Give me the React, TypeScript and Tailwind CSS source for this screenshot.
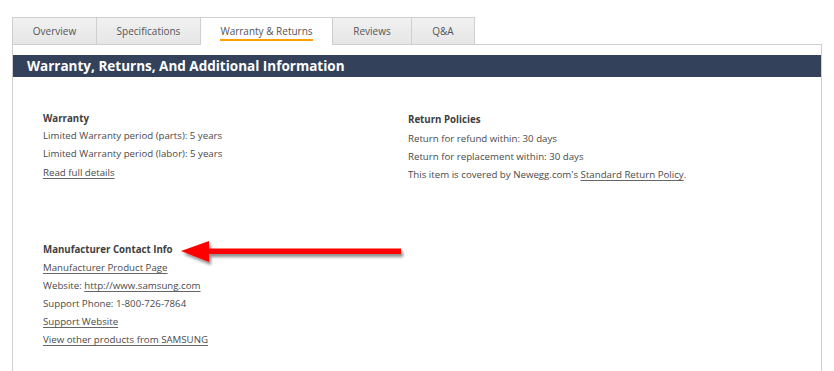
const tabs = [
  { label: "Overview", w: "w-[85px]" },
  { label: "Specifications", w: "w-[105px]" },
  { label: "Warranty & Returns", w: "w-[133px]", active: true },
  { label: "Reviews", w: "w-[80px]" },
  { label: "Q&A", w: "w-[64px]" },
];

function Row({ children, className = "" }: { children: React.ReactNode; className?: string }) {
  return <div className={`h-[18px] leading-[18px] ${className}`}>{children}</div>;
}

function Link({ children }: { children: React.ReactNode }) {
  return <span className="underline underline-offset-2 decoration-[#666]">{children}</span>;
}

function Arrow() {
  return (
    <svg
      className="absolute left-[176px] top-[236px]"
      width="236"
      height="34"
      viewBox="0 0 236 34"
    >
      <defs>
        <filter id="shadow" x="-10%" y="-50%" width="120%" height="200%">
          <feGaussianBlur in="SourceAlpha" stdDeviation="1.5" />
          <feOffset dx="2" dy="3" result="b" />
          <feComponentTransfer>
            <feFuncA type="linear" slope="0.45" />
          </feComponentTransfer>
          <feMerge>
            <feMergeNode />
            <feMergeNode in="SourceGraphic" />
          </feMerge>
        </filter>
      </defs>
      <path
        d="M5 15 L33 5 L33 12.5 L225 12.5 L225 18 L33 18 L33 26 Z"
        fill="#ff0000"
        filter="url(#shadow)"
      />
    </svg>
  );
}

export default function App() {
  return (
    <div className="relative min-h-[371px] bg-white pt-[17px] px-[12px] font-['Open_Sans',sans-serif] text-[9.7px] text-[#4a4a4a]">
      <div className="flex h-[28px] text-[10px]">
        {tabs.map((t) =>
          t.active ? (
            <div
              key={t.label}
              className={`${t.w} -ml-px first:ml-0 flex items-center justify-center border border-b-0 border-[#cfcfcf] bg-white text-[#555]`}
            >
              <span className="border-b-2 border-[#ffa000] pb-px leading-[14px] mt-[2px]">{t.label}</span>
            </div>
          ) : (
            <div
              key={t.label}
              className={`${t.w} -ml-px first:ml-0 flex items-center justify-center border border-[#cfcfcf] bg-gradient-to-b from-[#f1f1f1] to-[#e6e6e6] text-[#555]`}
            >
              {t.label}
            </div>
          )
        )}
        <div className="flex-1 border-b border-[#cfcfcf]" />
      </div>
      <div className="border-l border-r border-[#cfcfcf] min-h-[326px]">
        <div className="pt-[10px]">
          <div className="h-[22px] bg-[#33425a] pl-[14px] text-[13.5px] font-bold leading-[22px] text-white">
            Warranty, Returns, And Additional Information
          </div>
        </div>
        <div className="pl-[30px] pt-[33px]">
          <div className="flex">
            <div className="w-[365px]">
              <Row className="font-bold text-[#3e3e3e]">Warranty</Row>
              <Row className="-mt-px">Limited Warranty period (parts): 5 years</Row>
              <Row>Limited Warranty period (labor): 5 years</Row>
              <Row className="mt-px">
                <Link>Read full details</Link>
              </Row>
            </div>
            <div className="pt-px">
              <Row className="font-bold text-[#3e3e3e]">Return Policies</Row>
              <Row className="mt-px">Return for refund within: 30 days</Row>
              <Row>Return for replacement within: 30 days</Row>
              <Row>
                This item is covered by Newegg.com's <Link>Standard Return Policy</Link>.
              </Row>
            </div>
          </div>
          <div className="mt-[57px]">
            <Row className="font-bold text-[#3e3e3e]">Manufacturer Contact Info</Row>
            <Row>
              <Link>Manufacturer Product Page</Link>
            </Row>
            <Row>
              Website: <Link>http://www.samsung.com</Link>
            </Row>
            <Row>Support Phone: 1-800-726-7864</Row>
            <Row>
              <Link>Support Website</Link>
            </Row>
            <Row>
              <Link>View other products from SAMSUNG</Link>
            </Row>
          </div>
        </div>
      </div>
      <Arrow />
    </div>
  );
}
